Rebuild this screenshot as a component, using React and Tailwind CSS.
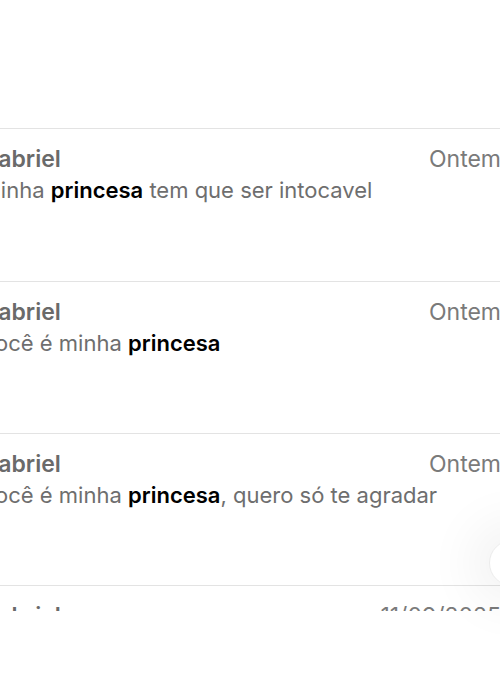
import React from "react";

const results = [
  { name: "Gabriel", time: "Ontem", before: "Minha ", after: " tem que ser intocavel" },
  { name: "Gabriel", time: "Ontem", before: "Você é minha ", after: "" },
  { name: "Gabriel", time: "Ontem", before: "Você é minha ", after: ", quero só te agradar" },
];

function ResultRow({ item, first }) {
  return (
    <div className={`border-t border-[#e3e3e3] ${first ? "h-[153px]" : "h-[152px]"} pt-[16px]`}>
      <div className="flex items-baseline justify-between">
        <span className="text-[23px] leading-[28px] font-semibold text-[#6a6a6a]">{item.name}</span>
        <span className="text-[23px] leading-[28px] text-[#7a7a7a]">{item.time}</span>
      </div>
      <p className="mt-[4px] text-[22px] leading-[26px] text-[#6e6e6e] whitespace-nowrap">
        {item.before}
        <span className="font-semibold text-black">princesa</span>
        {item.after}
      </p>
    </div>
  );
}

export default function App() {
  return (
    <div
      className="relative w-[500px] h-[699px] overflow-hidden bg-white"
      style={{ fontFamily: "Inter, 'Noto Sans', sans-serif" }}
    >
      <div className="h-[128px]" />
      <div className="-ml-[19px] -mr-[1px]">
        {results.map((item, i) => (
          <ResultRow key={i} item={item} first={i === 0} />
        ))}
        {/* last result, cut off by the bottom of the list */}
        <div className="border-t border-[#e3e3e3] h-[26px] overflow-hidden pt-[16px]">
          <div className="flex items-baseline justify-between">
            <span className="text-[23px] leading-[28px] font-semibold text-[#6a6a6a]">Gabriel</span>
            <span className="text-[23px] leading-[28px] text-[#7a7a7a]">11/09/2025</span>
          </div>
        </div>
      </div>

      {/* floating button peeking in from the right edge */}
      <div className="absolute left-[489px] top-[540px] w-[46px] h-[46px] rounded-full border border-[#ececec] bg-white shadow-[0_0_50px_20px_rgba(0,0,0,0.05)]" />
    </div>
  );
}
